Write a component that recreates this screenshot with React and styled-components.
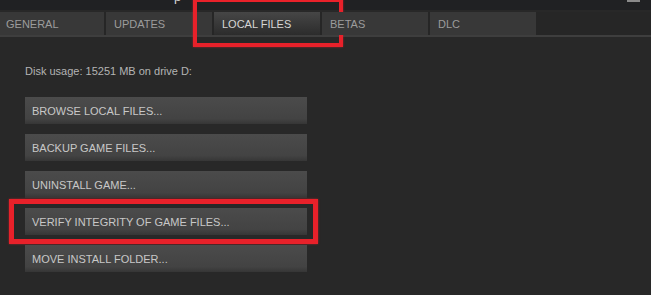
import React from "react";
import styled, { createGlobalStyle, css } from "styled-components";

const Global = createGlobalStyle`
  html, body { margin: 0; padding: 0; background: #272727; }
  body { font-family: "Liberation Sans", Arial, sans-serif; }
`;

const Window = styled.div`
  width: 651px;
  height: 295px;
  overflow: hidden;
  background: #282828;
  display: flex;
  flex-direction: column;
`;

const TitleStrip = styled.div`
  height: 10px;
  background: #202123;
  display: flex;
  align-items: flex-start;
  overflow: hidden;
`;

const TitleText = styled.span`
  margin-top: -10px;
  margin-left: 174px;
  font-size: 13px;
  line-height: 13px;
  color: #d8d8d8;
`;

const WindowCtl = styled.span`
  margin-left: auto;
  margin-right: 11px;
  width: 13px;
  height: 2px;
  background: #8a8a8a;
`;

const TabBar = styled.div`
  display: flex;
  gap: 2px;
  margin-top: 2px;
  margin-left: -2px;
  height: 23px;
  background: #262626;
`;

const Tab = styled.div`
  position: relative;
  width: 106px;
  box-sizing: border-box;
  padding-left: 8px;
  display: flex;
  align-items: center;
  font-size: 11px;
  color: #9c9c9c;
  background: #383838;
  ${(p) =>
    p.$active &&
    css`
      color: #d6d6d6;
      background: linear-gradient(#464646, #2c2c2c);
    `}
`;

const Highlight = styled.span`
  position: absolute;
  pointer-events: none;
  border: ${(p) => p.$w}px solid #e8212a;
  box-shadow: 0 0 2px rgba(232, 33, 42, 0.6);
  top: ${(p) => p.$t}px;
  left: ${(p) => p.$l}px;
  right: ${(p) => p.$r}px;
  bottom: ${(p) => p.$b}px;
`;

const Divider = styled.div`
  height: 2px;
  background: #3e3e3e;
`;

const Content = styled.div`
  padding: 27px 0 0 25px;
  display: flex;
  flex-direction: column;
`;

const DiskUsage = styled.div`
  font-size: 11px;
  line-height: 14px;
  color: #b4b4b4;
  margin-bottom: 19px;
`;

const ButtonList = styled.div`
  display: flex;
  flex-direction: column;
  gap: 10px;
`;

const ButtonWrap = styled.div`
  position: relative;
  width: 282px;
`;

const ActionButton = styled.div`
  height: 27px;
  box-sizing: border-box;
  padding-left: 7px;
  display: flex;
  align-items: center;
  font-size: 11px;
  color: #c8c8c8;
  background: linear-gradient(#4b4b4b 0%, #434343 80%, #363636 100%);
`;

const buttons = [
  "BROWSE LOCAL FILES...",
  "BACKUP GAME FILES...",
  "UNINSTALL GAME...",
  "VERIFY INTEGRITY OF GAME FILES...",
  "MOVE INSTALL FOLDER...",
];

const tabs = ["GENERAL", "UPDATES", "LOCAL FILES", "BETAS", "DLC"];

export default function App() {
  return (
    <>
      <Global />
      <Window>
        <TitleStrip>
          <TitleText>p</TitleText>
          <WindowCtl />
        </TitleStrip>
        <TabBar>
          {tabs.map((t) => (
            <Tab key={t} $active={t === "LOCAL FILES"}>
              {t}
              {t === "LOCAL FILES" && (
                <Highlight $w={4} $t={-14} $l={-21} $r={-23} $b={-12} />
              )}
            </Tab>
          ))}
        </TabBar>
        <Divider />
        <Content>
          <DiskUsage>Disk usage: 15251 MB on drive D:</DiskUsage>
          <ButtonList>
            {buttons.map((b) => (
              <ButtonWrap key={b}>
                <ActionButton>{b}</ActionButton>
                {b.startsWith("VERIFY") && (
                  <Highlight $w={5} $t={-9} $l={-16} $r={-11} $b={-9} />
                )}
              </ButtonWrap>
            ))}
          </ButtonList>
        </Content>
      </Window>
    </>
  );
}
